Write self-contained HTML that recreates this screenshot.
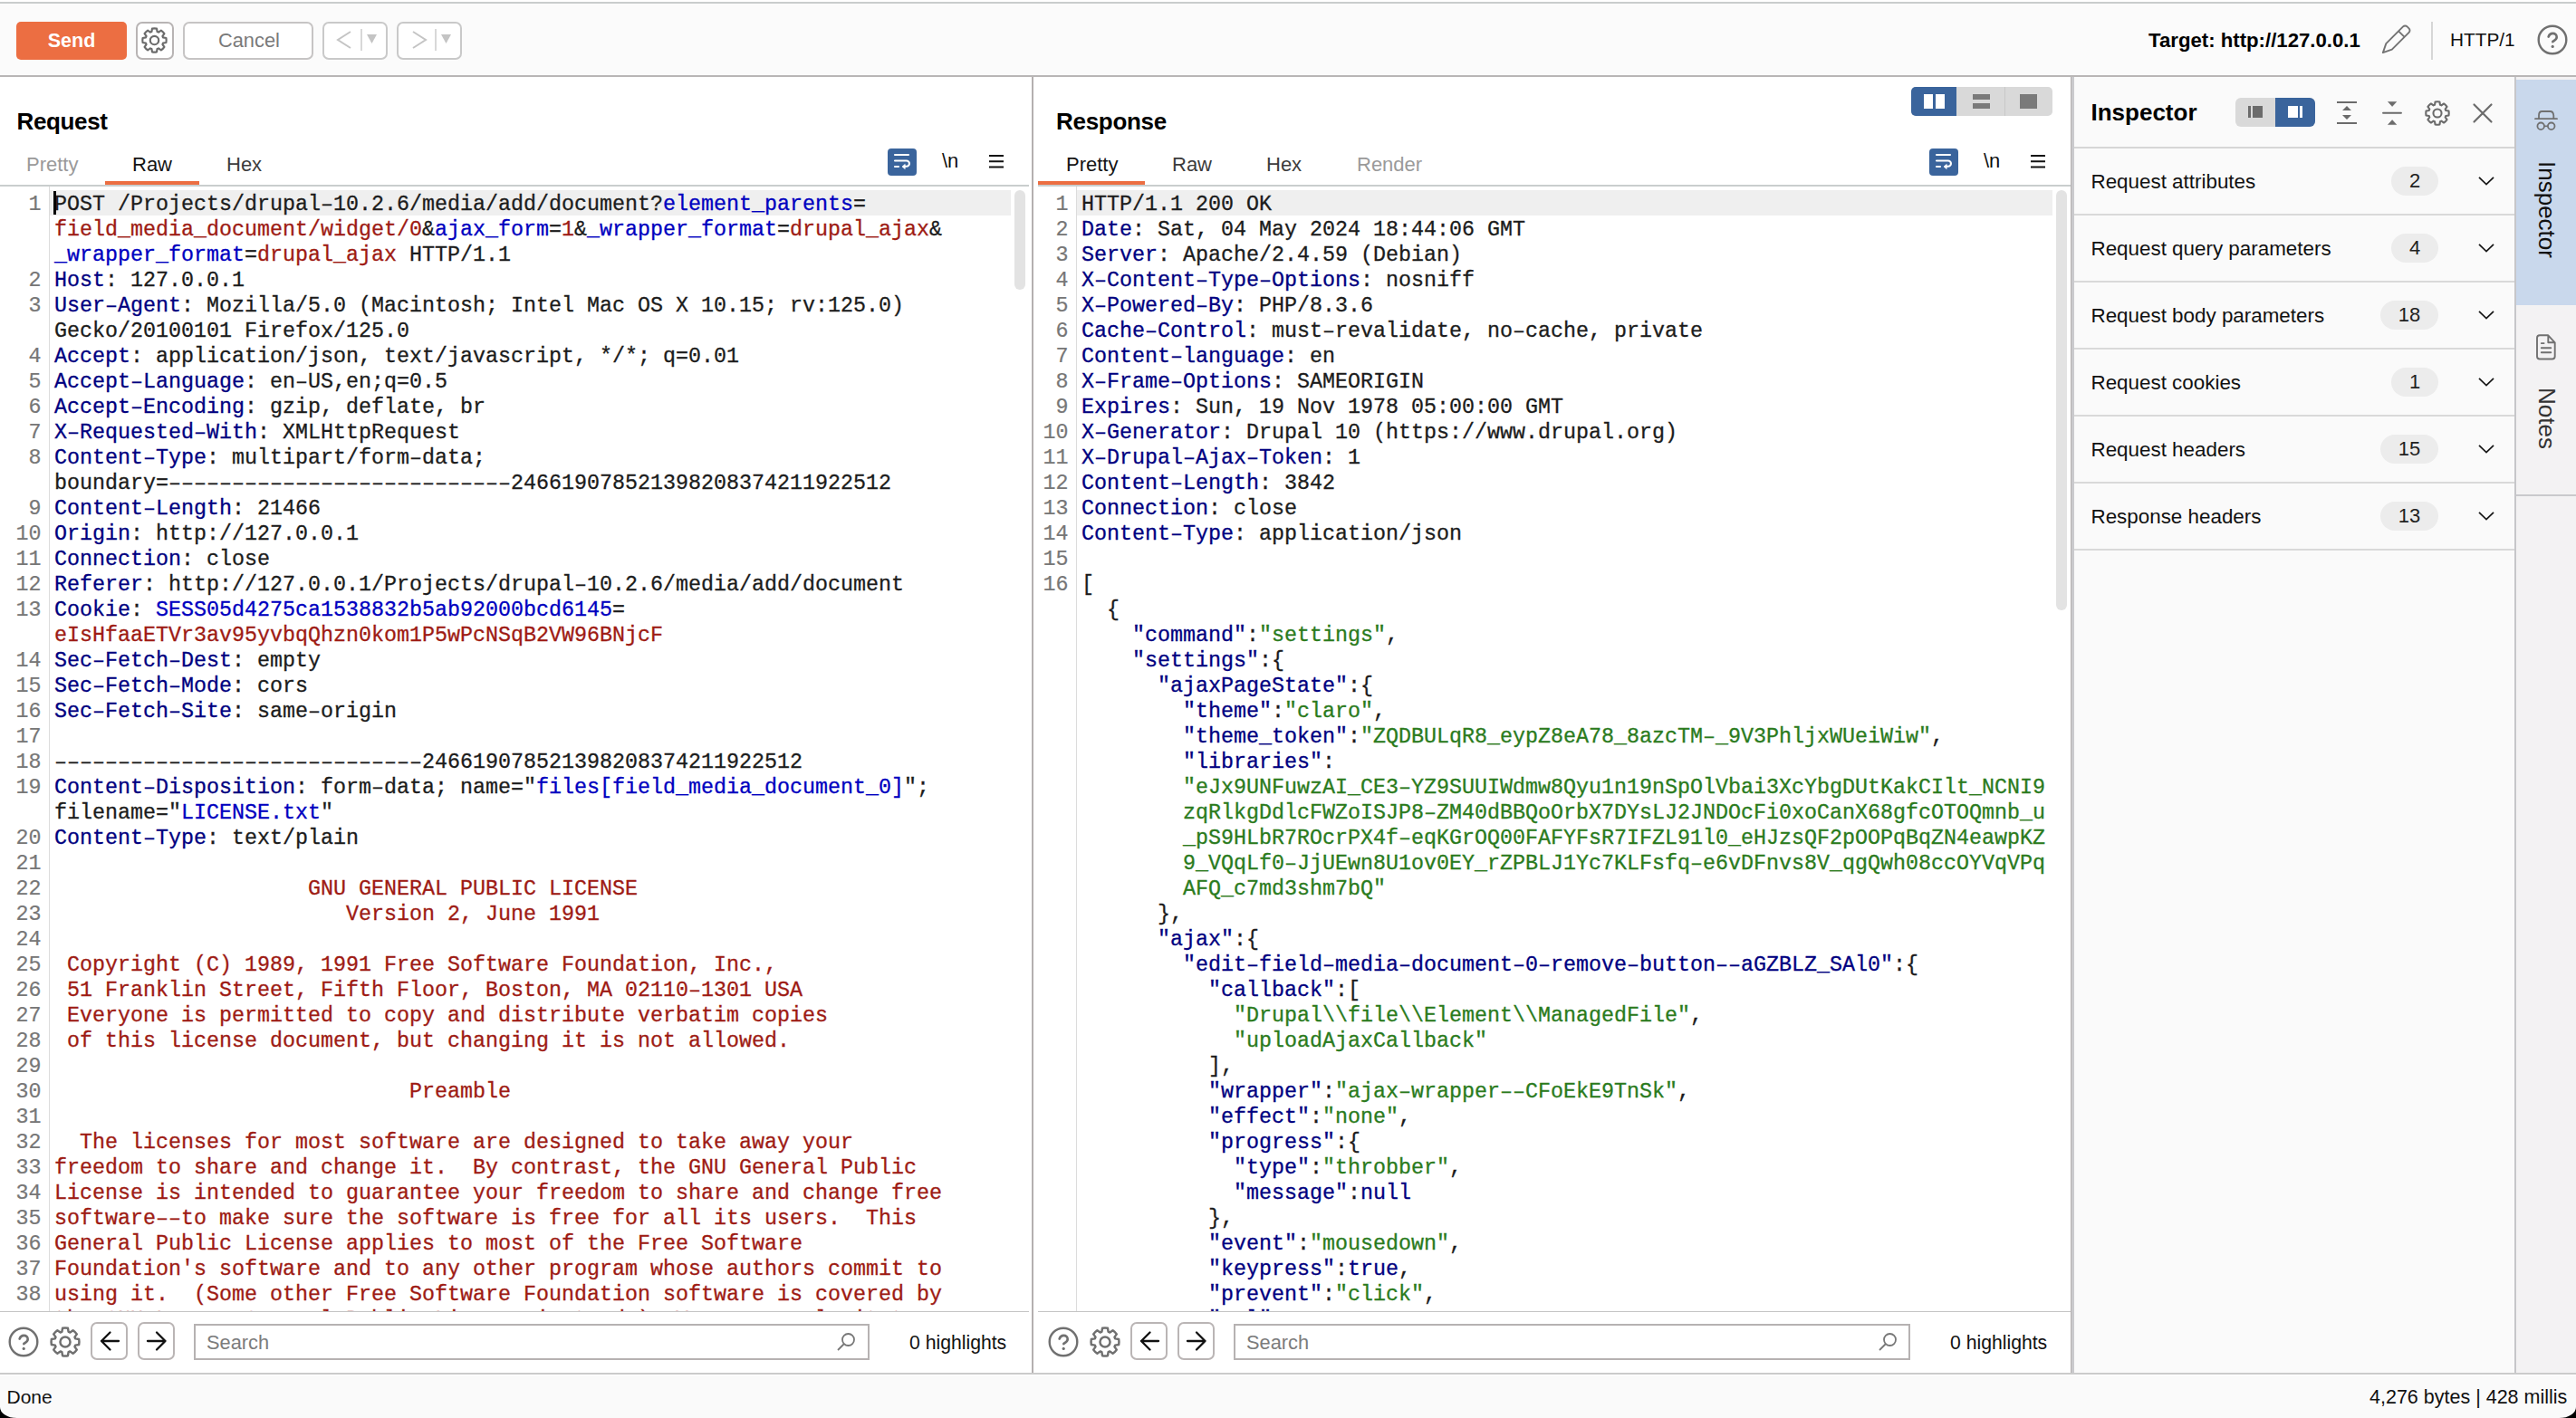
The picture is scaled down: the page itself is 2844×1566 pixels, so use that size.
<!DOCTYPE html>
<html><head><meta charset="utf-8">
<style>
*{margin:0;padding:0;box-sizing:border-box}
html,body{width:2844px;height:1566px;overflow:hidden;background:#fff;font-family:"Liberation Sans",sans-serif;color:#111}
.a{position:absolute}
.toolbar{left:0;top:2px;width:2844px;height:83px;background:#fbfbfb;border-top:2px solid #c9cdcd;border-bottom:2px solid #b9b6b6}
.btn{position:absolute;border:2px solid #bdbaba;border-radius:7px;background:#fff}
.send{left:18px;top:24px;width:122px;height:42px;background:#ec6e42;border-radius:5px;color:#fff;font-weight:bold;font-size:21.5px;line-height:42px;text-align:center}
.ui{font-size:22px;white-space:nowrap;line-height:1}
.title{font-size:26px;font-weight:bold;color:#000;line-height:1;white-space:nowrap}
.tab{font-size:22px;line-height:1;white-space:nowrap}
.code{font-family:"Liberation Mono",monospace;font-size:23.33px;line-height:28px;white-space:pre;color:#1c1c1c;-webkit-text-stroke:0.3px currentColor}
.nums{font-family:"Liberation Mono",monospace;font-size:23.33px;line-height:28px;white-space:pre;color:#777;text-align:right;-webkit-text-stroke:0.2px currentColor}
.n{color:#000080}.b{color:#0000c0}.r{color:#9e1b14}.g{color:#2b7b1d}
svg{position:absolute;overflow:visible}
</style></head><body>

<!-- toolbar -->
<div class="a toolbar"></div>
<div class="a send">Send</div>
<div class="btn" style="left:150px;top:24px;width:42px;height:42px;border-color:#b8b4b4"></div>
<svg style="left:156.3px;top:30.3px" width="29" height="29" viewBox="0 0 24 24"><path fill="none" stroke="#6b6b6b" stroke-width="1.8" stroke-linejoin="round" d="M9.44 4.11 L9.92 1.30 A10.90 10.90 0 0 1 14.08 1.30 L14.56 4.11 A8.30 8.30 0 0 1 15.77 4.60 L18.10 2.96 A10.90 10.90 0 0 1 21.04 5.90 L19.40 8.23 A8.30 8.30 0 0 1 19.89 9.44 L22.70 9.92 A10.90 10.90 0 0 1 22.70 14.08 L19.89 14.56 A8.30 8.30 0 0 1 19.40 15.77 L21.04 18.10 A10.90 10.90 0 0 1 18.10 21.04 L15.77 19.40 A8.30 8.30 0 0 1 14.56 19.89 L14.08 22.70 A10.90 10.90 0 0 1 9.92 22.70 L9.44 19.89 A8.30 8.30 0 0 1 8.23 19.40 L5.90 21.04 A10.90 10.90 0 0 1 2.96 18.10 L4.60 15.77 A8.30 8.30 0 0 1 4.11 14.56 L1.30 14.08 A10.90 10.90 0 0 1 1.30 9.92 L4.11 9.44 A8.30 8.30 0 0 1 4.60 8.23 L2.96 5.90 A10.90 10.90 0 0 1 5.90 2.96 L8.23 4.60 A8.30 8.30 0 0 1 9.44 4.11Z"/><circle cx="12" cy="12" r="3.9" fill="none" stroke="#6b6b6b" stroke-width="1.8"/></svg>
<div class="btn" style="left:202px;top:24px;width:144px;height:42px;border-color:#c6c4c4"></div>
<div class="a ui" style="left:241px;top:34px;color:#7a7a7a;font-size:21.8px">Cancel</div>
<div class="btn" style="left:356px;top:24px;width:72px;height:42px;border-color:#c9c9c9"></div>
<svg style="left:370px;top:33px" width="20" height="22"><path d="M17 2 L3 11 L17 20" fill="none" stroke="#c4c4c4" stroke-width="2"/></svg>
<div class="a" style="left:398px;top:32px;width:1.5px;height:24px;background:#d8d8d8"></div>
<svg style="left:405px;top:38px" width="11" height="11"><path d="M0 0H11L5.5 10Z" fill="#c4c4c4"/></svg>
<div class="btn" style="left:438px;top:24px;width:72px;height:42px;border-color:#c9c9c9"></div>
<svg style="left:453px;top:33px" width="20" height="22"><path d="M3 2 L17 11 L3 20" fill="none" stroke="#c4c4c4" stroke-width="2"/></svg>
<div class="a" style="left:480px;top:32px;width:1.5px;height:24px;background:#d8d8d8"></div>
<svg style="left:487px;top:38px" width="11" height="11"><path d="M0 0H11L5.5 10Z" fill="#c4c4c4"/></svg>

<div class="a ui" style="left:2372px;top:34px;font-weight:bold;font-size:22.2px;color:#000">Target: http://127.0.0.1</div>
<svg style="left:2620px;top:20px" width="50" height="48"><g transform="translate(10.5 38.5) rotate(-45)"><path d="M0.5 0 L10 -4.6 H36.5 a3.2 3.2 0 0 1 3.2 3.2 V1.4 a3.2 3.2 0 0 1 -3.2 3.2 H10 Z M29.5 -4.6 V4.6" fill="none" stroke="#737373" stroke-width="1.9" stroke-linejoin="round"/></g></svg>
<div class="a" style="left:2684px;top:24px;width:2px;height:42px;background:#d6d6d6"></div>
<div class="a ui" style="left:2705px;top:34px;font-size:20.8px;color:#111">HTTP/1</div>
<svg style="left:2801px;top:27px" width="34" height="34" viewBox="0 0 34 34"><circle cx="17" cy="17" r="15.3" fill="none" stroke="#707070" stroke-width="2.4"/><path d="M12.6 13.6c0.8-2.4 2.5-3.7 4.7-3.7 2.6 0 4.4 1.7 4.4 4 0 2.9-2.9 3.9-4.4 5.2" fill="none" stroke="#707070" stroke-width="2.6" stroke-linecap="round"/><circle cx="17.2" cy="24.4" r="1.6" fill="#707070"/></svg>

<!-- dividers -->
<div class="a" style="left:1139px;top:85px;width:2px;height:1431px;background:#b4b0b0"></div>
<div class="a" style="left:2286px;top:85px;width:1px;height:1431px;background:#b4b0b0"></div>
<div class="a" style="left:2287px;top:85px;width:3px;height:1431px;background:#cacacd"></div>

<!-- REQUEST PANEL -->
<div class="a title" style="left:18.5px;top:121px;letter-spacing:-0.35px">Request</div>
<div class="a tab" style="left:29px;top:171px;color:#9a9a9a">Pretty</div>
<div class="a tab" style="left:146px;top:171px;color:#151515">Raw</div>
<div class="a tab" style="left:250px;top:171px;color:#3c3c3c">Hex</div>
<div class="a" style="left:116px;top:200px;width:104px;height:4px;background:#ec6e42"></div>
<div class="a" style="left:0;top:204px;width:1136px;height:2px;background:#c9cece"></div>
<!-- wrap btn -->
<div class="a" style="left:980px;top:164px;width:32px;height:30px;background:#3a649c;border-radius:4px"></div>
<svg style="left:980px;top:164px" width="32" height="30"><path d="M8 7.05H23 M8 13.5H20.8A3.15 3.15 0 0 1 20.8 19.8H18.5 M8 20H12" fill="none" stroke="#fff" stroke-width="2.1" stroke-linecap="round"/><path d="M16 20L19.2 17.4V22.6Z" fill="#fff" stroke="#fff" stroke-width="0.7" stroke-linejoin="round"/></svg>
<div class="a" style="left:1040px;top:167px;font-family:'Liberation Sans';font-size:22px;color:#111;line-height:1">\n</div>
<svg style="left:1092px;top:171px" width="16" height="15"><path d="M0 1H16M0 7.2H16M0 13.5H16" stroke="#111" stroke-width="2"/></svg>

<!-- request editor -->
<div class="a" style="left:54px;top:206px;width:1px;height:1242px;background:#dcdcdc"></div>
<div class="a" style="left:55px;top:210px;width:1061px;height:28px;background:#efefef"></div>
<div class="a" style="left:1120px;top:210px;width:12px;height:110px;background:#e3e3e3;border-radius:6px"></div>
<div class="a" style="left:0;top:206px;width:1136px;height:1242px;overflow:hidden">
  <div class="a nums" style="left:0;top:6px;width:45.6px">1


2
3

4
5
6
7
8

9
10
11
12
13

14
15
16
17
18
19

20
21
22
23
24
25
26
27
28
29
30
31
32
33
34
35
36
37
38
39</div>
  <div class="a code" style="left:60px;top:6px">POST /Projects/drupal–10.2.6/media/add/document?<span class="b">element_parents</span>=
<span class="r">field_media_document/widget/0</span>&amp;<span class="b">ajax_form</span>=<span class="r">1</span>&amp;<span class="b">_wrapper_format</span>=<span class="r">drupal_ajax</span>&amp;
<span class="b">_wrapper_format</span>=<span class="r">drupal_ajax</span> HTTP/1.1
<span class="n">Host</span>: 127.0.0.1
<span class="n">User–Agent</span>: Mozilla/5.0 (Macintosh; Intel Mac OS X 10.15; rv:125.0)
Gecko/20100101 Firefox/125.0
<span class="n">Accept</span>: application/json, text/javascript, */*; q=0.01
<span class="n">Accept–Language</span>: en–US,en;q=0.5
<span class="n">Accept–Encoding</span>: gzip, deflate, br
<span class="n">X–Requested–With</span>: XMLHttpRequest
<span class="n">Content–Type</span>: multipart/form–data;
boundary=–––––––––––––––––––––––––––246619078521398208374211922512
<span class="n">Content–Length</span>: 21466
<span class="n">Origin</span>: http://127.0.0.1
<span class="n">Connection</span>: close
<span class="n">Referer</span>: http://127.0.0.1/Projects/drupal–10.2.6/media/add/document
<span class="n">Cookie</span>: <span class="b">SESS05d4275ca1538832b5ab92000bcd6145</span>=
<span class="r">eIsHfaaETVr3av95yvbqQhzn0kom1P5wPcNSqB2VW96BNjcF</span>
<span class="n">Sec–Fetch–Dest</span>: empty
<span class="n">Sec–Fetch–Mode</span>: cors
<span class="n">Sec–Fetch–Site</span>: same–origin

–––––––––––––––––––––––––––––246619078521398208374211922512
<span class="n">Content–Disposition</span>: form–data; name="<span class="b">files[field_media_document_0]</span>";
filename="<span class="b">LICENSE.txt</span>"
<span class="n">Content–Type</span>: text/plain

<span class="r">                    GNU GENERAL PUBLIC LICENSE</span>
<span class="r">                       Version 2, June 1991</span>

<span class="r"> Copyright (C) 1989, 1991 Free Software Foundation, Inc.,</span>
<span class="r"> 51 Franklin Street, Fifth Floor, Boston, MA 02110–1301 USA</span>
<span class="r"> Everyone is permitted to copy and distribute verbatim copies</span>
<span class="r"> of this license document, but changing it is not allowed.</span>

<span class="r">                            Preamble</span>

<span class="r">  The licenses for most software are designed to take away your</span>
<span class="r">freedom to share and change it.  By contrast, the GNU General Public</span>
<span class="r">License is intended to guarantee your freedom to share and change free</span>
<span class="r">software––to make sure the software is free for all its users.  This</span>
<span class="r">General Public License applies to most of the Free Software</span>
<span class="r">Foundation's software and to any other program whose authors commit to</span>
<span class="r">using it.  (Some other Free Software Foundation software is covered by</span>
<span class="r">the GNU Lesser General Public License instead.)  You can apply it to</span></div>
</div>
<div class="a" style="left:59px;top:211px;width:3px;height:26px;background:#000"></div>
<div class="a" style="left:0;top:1448px;width:1136px;height:1px;background:#c4c4c4"></div>

<!-- request bottom bar -->
<svg style="left:9px;top:1465px" width="34" height="34" viewBox="0 0 34 34"><circle cx="17" cy="17" r="15.3" fill="none" stroke="#707070" stroke-width="2.4"/><path d="M12.6 13.6c0.8-2.4 2.5-3.7 4.7-3.7 2.6 0 4.4 1.7 4.4 4 0 2.9-2.9 3.9-4.4 5.2" fill="none" stroke="#707070" stroke-width="2.6" stroke-linecap="round"/><circle cx="17.2" cy="24.4" r="1.6" fill="#707070"/></svg>
<svg style="left:54.8px;top:1464.8px" width="34" height="34" viewBox="0 0 24 24"><path fill="none" stroke="#707070" stroke-width="1.75" stroke-linejoin="round" d="M9.44 4.11 L9.92 1.30 A10.90 10.90 0 0 1 14.08 1.30 L14.56 4.11 A8.30 8.30 0 0 1 15.77 4.60 L18.10 2.96 A10.90 10.90 0 0 1 21.04 5.90 L19.40 8.23 A8.30 8.30 0 0 1 19.89 9.44 L22.70 9.92 A10.90 10.90 0 0 1 22.70 14.08 L19.89 14.56 A8.30 8.30 0 0 1 19.40 15.77 L21.04 18.10 A10.90 10.90 0 0 1 18.10 21.04 L15.77 19.40 A8.30 8.30 0 0 1 14.56 19.89 L14.08 22.70 A10.90 10.90 0 0 1 9.92 22.70 L9.44 19.89 A8.30 8.30 0 0 1 8.23 19.40 L5.90 21.04 A10.90 10.90 0 0 1 2.96 18.10 L4.60 15.77 A8.30 8.30 0 0 1 4.11 14.56 L1.30 14.08 A10.90 10.90 0 0 1 1.30 9.92 L4.11 9.44 A8.30 8.30 0 0 1 4.60 8.23 L2.96 5.90 A10.90 10.90 0 0 1 5.90 2.96 L8.23 4.60 A8.30 8.30 0 0 1 9.44 4.11Z"/><circle cx="12" cy="12" r="3.9" fill="none" stroke="#707070" stroke-width="1.75"/></svg>
<div class="btn" style="left:100px;top:1460px;width:41px;height:42px;border-color:#bab5b5"></div>
<svg style="left:110px;top:1470px" width="22" height="22"><path d="M21 11H2 M11.5 1.5L2 11 11.5 20.5" fill="none" stroke="#111" stroke-width="2.3" stroke-linecap="round" stroke-linejoin="round"/></svg>
<div class="btn" style="left:152px;top:1460px;width:41px;height:42px;border-color:#bab5b5"></div>
<svg style="left:162px;top:1470px" width="22" height="22"><path d="M1 11H20.5 M11 1.5L20.5 11 11 20.5" fill="none" stroke="#111" stroke-width="2.3" stroke-linecap="round" stroke-linejoin="round"/></svg>
<div class="a" style="left:214px;top:1462px;width:746px;height:40px;border:2px solid #b6b2b2;background:#fff"></div>
<div class="a ui" style="left:228px;top:1472px;color:#7c7c7c;font-size:21.8px">Search</div>
<svg style="left:923px;top:1471px" width="22" height="22"><circle cx="13.5" cy="8.5" r="6.5" fill="none" stroke="#777" stroke-width="1.8"/><path d="M9 13L2 20" stroke="#777" stroke-width="1.8"/></svg>
<div class="a ui" style="left:1004px;top:1472px;font-size:21.2px;color:#111">0 highlights</div>

<!-- RESPONSE PANEL -->
<div class="a title" style="left:1166px;top:121px;letter-spacing:-0.3px">Response</div>
<div class="a tab" style="left:1177px;top:171px;color:#151515">Pretty</div>
<div class="a tab" style="left:1294px;top:171px;color:#3c3c3c">Raw</div>
<div class="a tab" style="left:1398px;top:171px;color:#3c3c3c">Hex</div>
<div class="a tab" style="left:1498px;top:171px;color:#9a9a9a">Render</div>
<div class="a" style="left:1146px;top:200px;width:118px;height:4px;background:#ec6e42"></div>
<div class="a" style="left:1146px;top:204px;width:1140px;height:2px;background:#c9cece"></div>
<!-- layout toggle -->
<div class="a" style="left:2110px;top:96px;width:156px;height:32px;background:#d9d9d9;border-radius:5px;overflow:hidden">
  <div class="a" style="left:0;top:0;width:50px;height:32px;background:#3a649c"></div>
  <div class="a" style="left:103px;top:0;width:1px;height:32px;background:#c8c8c8"></div>
</div>
<div class="a" style="left:2124px;top:104px;width:10px;height:16px;background:#fff"></div>
<div class="a" style="left:2137px;top:104px;width:10px;height:16px;background:#fff"></div>
<div class="a" style="left:2178px;top:104px;width:19px;height:6px;background:#7a7a7a"></div>
<div class="a" style="left:2178px;top:114px;width:19px;height:6px;background:#7a7a7a"></div>
<div class="a" style="left:2230px;top:104px;width:19px;height:16px;background:#7a7a7a"></div>
<!-- wrap btn -->
<div class="a" style="left:2130px;top:164px;width:32px;height:30px;background:#3a649c;border-radius:4px"></div>
<svg style="left:2130px;top:164px" width="32" height="30"><path d="M8 7.05H23 M8 13.5H20.8A3.15 3.15 0 0 1 20.8 19.8H18.5 M8 20H12" fill="none" stroke="#fff" stroke-width="2.1" stroke-linecap="round"/><path d="M16 20L19.2 17.4V22.6Z" fill="#fff" stroke="#fff" stroke-width="0.7" stroke-linejoin="round"/></svg>
<div class="a" style="left:2190px;top:167px;font-family:'Liberation Sans';font-size:22px;color:#111;line-height:1">\n</div>
<svg style="left:2242px;top:171px" width="16" height="15"><path d="M0 1H16M0 7.2H16M0 13.5H16" stroke="#111" stroke-width="2"/></svg>

<!-- response editor -->
<div class="a" style="left:1188px;top:206px;width:1px;height:1242px;background:#dcdcdc"></div>
<div class="a" style="left:1189px;top:210px;width:1077px;height:28px;background:#efefef"></div>
<div class="a" style="left:2270px;top:210px;width:12px;height:464px;background:#e3e3e3;border-radius:6px"></div>
<div class="a" style="left:1134px;top:206px;width:1152px;height:1242px;overflow:hidden">
  <div class="a nums" style="left:0;top:6px;width:45.6px">1
2
3
4
5
6
7
8
9
10
11
12
13
14
15
16




























</div>
  <div class="a code" style="left:60px;top:6px">HTTP/1.1 200 OK
<span class="n">Date</span>: Sat, 04 May 2024 18:44:06 GMT
<span class="n">Server</span>: Apache/2.4.59 (Debian)
<span class="n">X–Content–Type–Options</span>: nosniff
<span class="n">X–Powered–By</span>: PHP/8.3.6
<span class="n">Cache–Control</span>: must–revalidate, no–cache, private
<span class="n">Content–language</span>: en
<span class="n">X–Frame–Options</span>: SAMEORIGIN
<span class="n">Expires</span>: Sun, 19 Nov 1978 05:00:00 GMT
<span class="n">X–Generator</span>: Drupal 10 (https://www.drupal.org)
<span class="n">X–Drupal–Ajax–Token</span>: 1
<span class="n">Content–Length</span>: 3842
<span class="n">Connection</span>: close
<span class="n">Content–Type</span>: application/json

[
  {
    <span class="n">"command"</span>:<span class="g">"settings"</span>,
    <span class="n">"settings"</span>:{
      <span class="n">"ajaxPageState"</span>:{
        <span class="n">"theme"</span>:<span class="g">"claro"</span>,
        <span class="n">"theme_token"</span>:<span class="g">"ZQDBULqR8_eypZ8eA78_8azcTM–_9V3PhljxWUeiWiw"</span>,
        <span class="n">"libraries"</span>:
        <span class="g">"eJx9UNFuwzAI_CE3–YZ9SUUIWdmw8Qyu1n19nSpOlVbai3XcYbgDUtKakCIlt_NCNI9</span>
        <span class="g">zqRlkgDdlcFWZoISJP8–ZM40dBBQoOrbX7DYsLJ2JNDOcFi0xoCanX68gfcOTOQmnb_u</span>
        <span class="g">_pS9HLbR7ROcrPX4f–eqKGrOQ00FAFYFsR7IFZL91l0_eHJzsQF2pOOPqBqZN4eawpKZ</span>
        <span class="g">9_VQqLf0–JjUEwn8U1ov0EY_rZPBLJ1Yc7KLFsfq–e6vDFnvs8V_qgQwh08ccOYVqVPq</span>
        <span class="g">AFQ_c7md3shm7bQ"</span>
      },
      <span class="n">"ajax"</span>:{
        <span class="n">"edit–field–media–document–0–remove–button––aGZBLZ_SAl0"</span>:{
          <span class="n">"callback"</span>:[
            <span class="g">"Drupal\\file\\Element\\ManagedFile"</span>,
            <span class="g">"uploadAjaxCallback"</span>
          ],
          <span class="n">"wrapper"</span>:<span class="g">"ajax–wrapper––CFoEkE9TnSk"</span>,
          <span class="n">"effect"</span>:<span class="g">"none"</span>,
          <span class="n">"progress"</span>:{
            <span class="n">"type"</span>:<span class="g">"throbber"</span>,
            <span class="n">"message"</span>:<span class="n">null</span>
          },
          <span class="n">"event"</span>:<span class="g">"mousedown"</span>,
          <span class="n">"keypress"</span>:<span class="n">true</span>,
          <span class="n">"prevent"</span>:<span class="g">"click"</span>,
          <span class="n">"url"</span>:</div>
</div>
<div class="a" style="left:1146px;top:1448px;width:1140px;height:1px;background:#c4c4c4"></div>

<!-- response bottom bar -->
<svg style="left:1157px;top:1465px" width="34" height="34" viewBox="0 0 34 34"><circle cx="17" cy="17" r="15.3" fill="none" stroke="#707070" stroke-width="2.4"/><path d="M12.6 13.6c0.8-2.4 2.5-3.7 4.7-3.7 2.6 0 4.4 1.7 4.4 4 0 2.9-2.9 3.9-4.4 5.2" fill="none" stroke="#707070" stroke-width="2.6" stroke-linecap="round"/><circle cx="17.2" cy="24.4" r="1.6" fill="#707070"/></svg>
<svg style="left:1203px;top:1464.8px" width="34" height="34" viewBox="0 0 24 24"><path fill="none" stroke="#707070" stroke-width="1.75" stroke-linejoin="round" d="M9.44 4.11 L9.92 1.30 A10.90 10.90 0 0 1 14.08 1.30 L14.56 4.11 A8.30 8.30 0 0 1 15.77 4.60 L18.10 2.96 A10.90 10.90 0 0 1 21.04 5.90 L19.40 8.23 A8.30 8.30 0 0 1 19.89 9.44 L22.70 9.92 A10.90 10.90 0 0 1 22.70 14.08 L19.89 14.56 A8.30 8.30 0 0 1 19.40 15.77 L21.04 18.10 A10.90 10.90 0 0 1 18.10 21.04 L15.77 19.40 A8.30 8.30 0 0 1 14.56 19.89 L14.08 22.70 A10.90 10.90 0 0 1 9.92 22.70 L9.44 19.89 A8.30 8.30 0 0 1 8.23 19.40 L5.90 21.04 A10.90 10.90 0 0 1 2.96 18.10 L4.60 15.77 A8.30 8.30 0 0 1 4.11 14.56 L1.30 14.08 A10.90 10.90 0 0 1 1.30 9.92 L4.11 9.44 A8.30 8.30 0 0 1 4.60 8.23 L2.96 5.90 A10.90 10.90 0 0 1 5.90 2.96 L8.23 4.60 A8.30 8.30 0 0 1 9.44 4.11Z"/><circle cx="12" cy="12" r="3.9" fill="none" stroke="#707070" stroke-width="1.75"/></svg>
<div class="btn" style="left:1248px;top:1460px;width:41px;height:42px;border-color:#bab5b5"></div>
<svg style="left:1258px;top:1470px" width="22" height="22"><path d="M21 11H2 M11.5 1.5L2 11 11.5 20.5" fill="none" stroke="#111" stroke-width="2.3" stroke-linecap="round" stroke-linejoin="round"/></svg>
<div class="btn" style="left:1300px;top:1460px;width:41px;height:42px;border-color:#bab5b5"></div>
<svg style="left:1310px;top:1470px" width="22" height="22"><path d="M1 11H20.5 M11 1.5L20.5 11 11 20.5" fill="none" stroke="#111" stroke-width="2.3" stroke-linecap="round" stroke-linejoin="round"/></svg>
<div class="a" style="left:1362px;top:1462px;width:747px;height:40px;border:2px solid #b6b2b2;background:#fff"></div>
<div class="a ui" style="left:1376px;top:1472px;color:#7c7c7c;font-size:21.8px">Search</div>
<svg style="left:2073px;top:1471px" width="22" height="22"><circle cx="13.5" cy="8.5" r="6.5" fill="none" stroke="#777" stroke-width="1.8"/><path d="M9 13L2 20" stroke="#777" stroke-width="1.8"/></svg>
<div class="a ui" style="left:2153px;top:1472px;font-size:21.2px;color:#111">0 highlights</div>

<!-- INSPECTOR -->
<div class="a" style="left:2290px;top:85px;width:486px;height:1431px;background:#fafafa"></div>
<div class="a title" style="left:2308.5px;top:111px">Inspector</div>
<div class="a" style="left:2468px;top:108px;width:88px;height:32px;background:#d9d9d9;border-radius:6px;overflow:hidden"><div class="a" style="left:44px;top:0;width:44px;height:32px;background:#3a649c"></div></div>
<div class="a" style="left:2482px;top:117px;width:3px;height:13px;background:#6b6b6b"></div>
<div class="a" style="left:2487px;top:117px;width:11px;height:13px;background:#6b6b6b"></div>
<div class="a" style="left:2526px;top:117px;width:11px;height:13px;background:#fff"></div>
<div class="a" style="left:2539px;top:117px;width:3px;height:13px;background:#fff"></div>
<svg style="left:2580px;top:112px" width="22" height="25"><path d="M0 1H22M0 24H22" stroke="#6b6b6b" stroke-width="2"/><path d="M11 5L6 10H16Z M11 20L6 15H16Z" fill="#6b6b6b"/></svg>
<svg style="left:2629px;top:112px" width="24" height="27"><path d="M2 12.7H22" stroke="#6b6b6b" stroke-width="1.9" stroke-linecap="round"/><path d="M7.5 0.4H16.7L12.1 5.4Z M12.1 20.6L16.7 25.6H7.5Z" fill="#6b6b6b" stroke="#6b6b6b" stroke-width="0.6" stroke-linejoin="round"/></svg>
<svg style="left:2676.8px;top:110.6px" width="28" height="28" viewBox="0 0 24 24"><path fill="none" stroke="#6b6b6b" stroke-width="1.8" stroke-linejoin="round" d="M9.44 4.11 L9.92 1.30 A10.90 10.90 0 0 1 14.08 1.30 L14.56 4.11 A8.30 8.30 0 0 1 15.77 4.60 L18.10 2.96 A10.90 10.90 0 0 1 21.04 5.90 L19.40 8.23 A8.30 8.30 0 0 1 19.89 9.44 L22.70 9.92 A10.90 10.90 0 0 1 22.70 14.08 L19.89 14.56 A8.30 8.30 0 0 1 19.40 15.77 L21.04 18.10 A10.90 10.90 0 0 1 18.10 21.04 L15.77 19.40 A8.30 8.30 0 0 1 14.56 19.89 L14.08 22.70 A10.90 10.90 0 0 1 9.92 22.70 L9.44 19.89 A8.30 8.30 0 0 1 8.23 19.40 L5.90 21.04 A10.90 10.90 0 0 1 2.96 18.10 L4.60 15.77 A8.30 8.30 0 0 1 4.11 14.56 L1.30 14.08 A10.90 10.90 0 0 1 1.30 9.92 L4.11 9.44 A8.30 8.30 0 0 1 4.60 8.23 L2.96 5.90 A10.90 10.90 0 0 1 5.90 2.96 L8.23 4.60 A8.30 8.30 0 0 1 9.44 4.11Z"/><circle cx="12" cy="12" r="3.9" fill="none" stroke="#6b6b6b" stroke-width="1.75"/></svg>
<svg style="left:2730px;top:114px" width="22" height="22"><path d="M1.5 1.5L20.5 20.5M20.5 1.5L1.5 20.5" stroke="#6b6b6b" stroke-width="2.2" stroke-linecap="round"/></svg>
<div class="a" style="left:2290px;top:162px;width:486px;height:2px;background:#d6d6d6"></div>
<div class="a ui" style="left:2308.5px;top:190px;font-size:22.4px;color:#111">Request attributes</div>
<div class="a" style="left:2640px;top:184px;width:52px;height:32px;border-radius:16px;background:#ececec;font-size:22px;line-height:32px;text-align:center;color:#222">2</div>
<svg style="left:2736px;top:194px" width="18" height="12"><path d="M1 1.8L9 9.6 17 1.8" fill="none" stroke="#1a1a1a" stroke-width="1.8"/></svg>
<div class="a" style="left:2290px;top:236px;width:486px;height:2px;background:#d9d9d9"></div>
<div class="a ui" style="left:2308.5px;top:264px;font-size:22.4px;color:#111">Request query parameters</div>
<div class="a" style="left:2640px;top:258px;width:52px;height:32px;border-radius:16px;background:#ececec;font-size:22px;line-height:32px;text-align:center;color:#222">4</div>
<svg style="left:2736px;top:268px" width="18" height="12"><path d="M1 1.8L9 9.6 17 1.8" fill="none" stroke="#1a1a1a" stroke-width="1.8"/></svg>
<div class="a" style="left:2290px;top:310px;width:486px;height:2px;background:#d9d9d9"></div>
<div class="a ui" style="left:2308.5px;top:338px;font-size:22.4px;color:#111">Request body parameters</div>
<div class="a" style="left:2628px;top:332px;width:64px;height:32px;border-radius:16px;background:#ececec;font-size:22px;line-height:32px;text-align:center;color:#222">18</div>
<svg style="left:2736px;top:342px" width="18" height="12"><path d="M1 1.8L9 9.6 17 1.8" fill="none" stroke="#1a1a1a" stroke-width="1.8"/></svg>
<div class="a" style="left:2290px;top:384px;width:486px;height:2px;background:#d9d9d9"></div>
<div class="a ui" style="left:2308.5px;top:412px;font-size:22.4px;color:#111">Request cookies</div>
<div class="a" style="left:2640px;top:406px;width:52px;height:32px;border-radius:16px;background:#ececec;font-size:22px;line-height:32px;text-align:center;color:#222">1</div>
<svg style="left:2736px;top:416px" width="18" height="12"><path d="M1 1.8L9 9.6 17 1.8" fill="none" stroke="#1a1a1a" stroke-width="1.8"/></svg>
<div class="a" style="left:2290px;top:458px;width:486px;height:2px;background:#d9d9d9"></div>
<div class="a ui" style="left:2308.5px;top:486px;font-size:22.4px;color:#111">Request headers</div>
<div class="a" style="left:2628px;top:480px;width:64px;height:32px;border-radius:16px;background:#ececec;font-size:22px;line-height:32px;text-align:center;color:#222">15</div>
<svg style="left:2736px;top:490px" width="18" height="12"><path d="M1 1.8L9 9.6 17 1.8" fill="none" stroke="#1a1a1a" stroke-width="1.8"/></svg>
<div class="a" style="left:2290px;top:532px;width:486px;height:2px;background:#d9d9d9"></div>
<div class="a ui" style="left:2308.5px;top:560px;font-size:22.4px;color:#111">Response headers</div>
<div class="a" style="left:2628px;top:554px;width:64px;height:32px;border-radius:16px;background:#ececec;font-size:22px;line-height:32px;text-align:center;color:#222">13</div>
<svg style="left:2736px;top:564px" width="18" height="12"><path d="M1 1.8L9 9.6 17 1.8" fill="none" stroke="#1a1a1a" stroke-width="1.8"/></svg>
<div class="a" style="left:2290px;top:606px;width:486px;height:2px;background:#d9d9d9"></div>

<!-- SIDEBAR -->
<div class="a" style="left:2776px;top:85px;width:2px;height:1431px;background:#c6c6c9"></div>
<div class="a" style="left:2778px;top:85px;width:66px;height:1431px;background:#f3f2f3"></div>
<div class="a" style="left:2778px;top:88px;width:66px;height:249px;background:#c9d8ec"></div>
<div class="a" style="left:2778px;top:337px;width:66px;height:209px;background:#f3f2f3"></div>
<div class="a" style="left:2778px;top:546px;width:66px;height:2px;background:#c9c9cc"></div>
<svg style="left:2790px;top:110px" width="40" height="40"><path d="M9 21.2H33" stroke="#707070" stroke-width="1.8" stroke-linecap="round"/><path d="M13 21.2V17.5C13 14.5 14 13 16.5 13H25.5C28 13 29 14.5 29.3 17.5V21.2" fill="none" stroke="#707070" stroke-width="1.8"/><circle cx="15.2" cy="29.3" r="3.8" fill="none" stroke="#707070" stroke-width="1.8"/><circle cx="26.7" cy="29.3" r="3.8" fill="none" stroke="#707070" stroke-width="1.8"/><path d="M19 29.3H23" stroke="#707070" stroke-width="1.6"/></svg>
<div class="a" style="left:2825px;top:178px;transform-origin:0 0;transform:rotate(90deg);font-size:26px;color:#111;line-height:1;white-space:nowrap">Inspector</div>
<svg style="left:2790px;top:360px" width="40" height="45"><path d="M11 13.3a3 3 0 0 1 3-3H23.3L30.7 18.3V33.5a3 3 0 0 1-3 3H14a3 3 0 0 1-3-3Z M23.3 10.3V18.3H30.7" fill="none" stroke="#707070" stroke-width="1.9" stroke-linejoin="round"/><path d="M15.8 19.1H18.6M15.8 24.3H26.3M15.8 29.2H26.3" stroke="#707070" stroke-width="1.9" stroke-linecap="round"/></svg>
<div class="a" style="left:2824.5px;top:428px;transform-origin:0 0;transform:rotate(90deg);font-size:26px;color:#333;line-height:1;white-space:nowrap">Notes</div>

<!-- STATUS BAR -->
<div class="a" style="left:0;top:1516px;width:2844px;height:50px;background:#fafafa;border-top:2px solid #cbcbcb"></div><div class="a" style="left:0;top:1518px;width:2844px;height:1px;background:#fff"></div>
<div class="a ui" style="left:7.5px;top:1531.5px;font-size:21px;color:#111">Done</div>
<div class="a ui" style="left:2616px;top:1533px;font-size:21.5px;color:#111">4,276 bytes | 428 millis</div>
<svg style="left:0;top:1554px" width="19" height="12"><path d="M0 0V12H18.5A18.5 12 0 0 1 0 0Z" fill="#000"/></svg>
<svg style="left:2825px;top:1554px" width="19" height="12"><path d="M19 0V12H0.5A18.5 12 0 0 0 19 0Z" fill="#000"/></svg>
</body></html>
